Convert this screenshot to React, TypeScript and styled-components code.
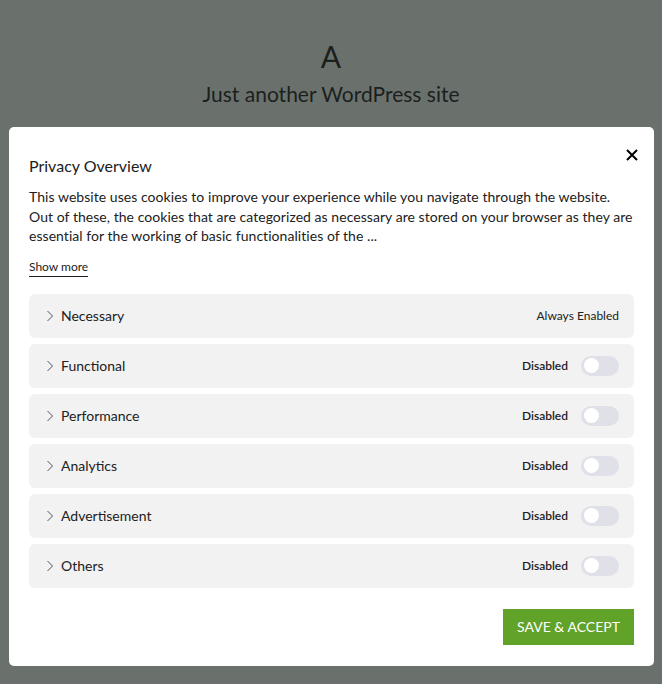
import React from "react";
import styled, { createGlobalStyle } from "styled-components";

const Global = createGlobalStyle`
  html, body { margin: 0; padding: 0; }
  body {
    background: #6a716d;
    font-family: "Lato", "Open Sans", sans-serif;
    color: #212121;
    width: 662px;
    height: 684px;
    overflow: hidden;
  }
`;

const Page = styled.div`
  display: flex;
  flex-direction: column;
  align-items: center;
  padding-top: 38px;
`;

const SiteTitle = styled.div`
  font-size: 30px;
  line-height: 36px;
  color: #1b1f1d;
`;

const Tagline = styled.div`
  font-size: 21px;
  line-height: 28px;
  margin-top: 6px;
  color: #1b1f1d;
`;

const Modal = styled.div`
  position: relative;
  box-sizing: border-box;
  margin-top: 19px;
  width: 645px;
  align-self: flex-start;
  margin-left: 9px;
  background: #fff;
  border-radius: 5px;
  padding: 28px 20px 21px 20px;
  display: flex;
  flex-direction: column;
`;

const Close = styled.button`
  position: absolute;
  top: 20px;
  right: 14px;
  width: 16px;
  height: 16px;
  border: none;
  background: none;
  padding: 0;
  display: flex;
  align-items: center;
  justify-content: center;
  cursor: pointer;
`;

const Heading = styled.div`
  font-size: 16px;
  line-height: 22px;
  color: #212121;
  margin-bottom: 10px;
`;

const Para = styled.p`
  margin: 0;
  font-size: 14px;
  line-height: 19.5px;
  letter-spacing: 0.05px;
  color: #212121;
`;

const ShowMore = styled.a`
  align-self: flex-start;
  margin-top: 12px;
  font-size: 12px;
  line-height: 17px;
  color: #212121;
  text-decoration: none;
  border-bottom: 1px solid #212121;
  padding-bottom: 1px;
`;

const List = styled.div`
  margin-top: 17px;
  display: flex;
  flex-direction: column;
  gap: 6px;
`;

const Row = styled.div`
  height: 44px;
  background: #f2f2f2;
  border-radius: 6px;
  display: flex;
  align-items: center;
  padding: 0 15px 0 17px;
`;

const Label = styled.div`
  flex: 1;
  display: flex;
  align-items: center;
  gap: 7px;
  font-size: 14px;
  color: #212121;
`;

const Status = styled.span<{ $bold?: boolean }>`
  font-size: 12px;
  font-weight: ${(p) => (p.$bold ? 600 : 400)};
  color: #212121;
`;

const Toggle = styled.span`
  margin-left: 13px;
  width: 38px;
  height: 20px;
  border-radius: 10px;
  background: #e0e0e8;
  display: flex;
  align-items: center;
  padding-left: 3px;
  box-sizing: border-box;
`;

const Knob = styled.span`
  width: 15px;
  height: 15px;
  border-radius: 50%;
  background: #fff;
`;

const Footer = styled.div`
  display: flex;
  justify-content: flex-end;
  margin-top: 21px;
`;

const SaveButton = styled.button`
  background: #61a229;
  color: #fff;
  border: none;
  height: 36px;
  width: 131px;
  padding: 0;
  white-space: nowrap;
  font-family: inherit;
  font-size: 14px;
  cursor: pointer;
`;

const Chevron = () => (
  <svg width="8" height="12" viewBox="0 0 8 12" fill="none">
    <path d="M1.5 1 L6.5 6 L1.5 11" stroke="#4a555c" strokeWidth="1" />
  </svg>
);

const categories = [
  { name: "Necessary", always: true },
  { name: "Functional" },
  { name: "Performance" },
  { name: "Analytics" },
  { name: "Advertisement" },
  { name: "Others" },
];

export default function App() {
  return (
    <>
      <Global />
      <Page>
        <SiteTitle>A</SiteTitle>
        <Tagline>Just another WordPress site</Tagline>
        <Modal>
          <Close aria-label="Close">
            <svg width="12" height="12" viewBox="0 0 12 12">
              <path d="M1 1 L11 11 M11 1 L1 11" stroke="#000" strokeWidth="2" />
            </svg>
          </Close>
          <Heading>Privacy Overview</Heading>
          <Para>
            This website uses cookies to improve your experience while you navigate through the website. Out of these, the cookies that are categorized as necessary are stored on your browser as they are essential for the working of basic functionalities of the ...
          </Para>
          <ShowMore href="#">Show more</ShowMore>
          <List>
            {categories.map((c) => (
              <Row key={c.name}>
                <Label>
                  <Chevron />
                  {c.name}
                </Label>
                {c.always ? (
                  <Status>Always Enabled</Status>
                ) : (
                  <>
                    <Status $bold>Disabled</Status>
                    <Toggle>
                      <Knob />
                    </Toggle>
                  </>
                )}
              </Row>
            ))}
          </List>
          <Footer>
            <SaveButton>SAVE &amp; ACCEPT</SaveButton>
          </Footer>
        </Modal>
      </Page>
    </>
  );
}
